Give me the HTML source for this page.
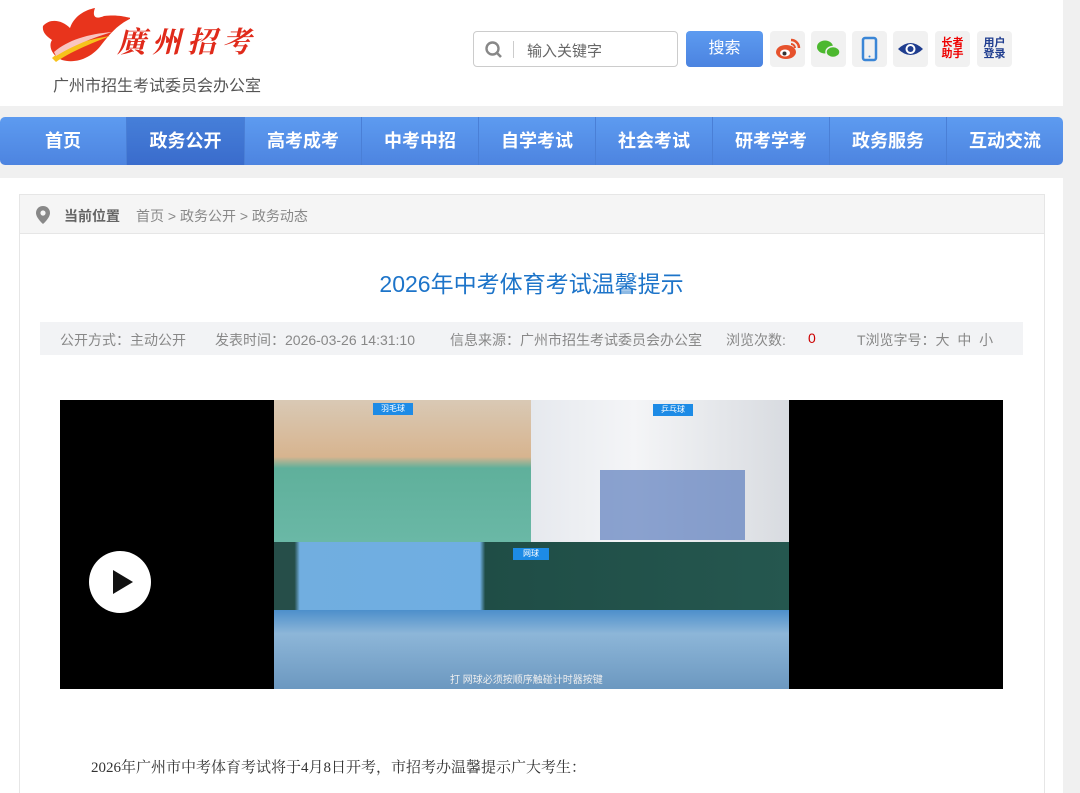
<!DOCTYPE html>
<html><head><meta charset="utf-8"><style>
*{margin:0;padding:0;box-sizing:border-box}
html,body{width:1080px;height:793px;overflow:hidden}
body{background:#f0f0f0;font-family:"Liberation Sans","Noto Sans CJK SC",sans-serif;position:relative}
.abs{position:absolute}
.wrap{position:absolute;left:0;top:0;width:1063px;height:793px;background:#fff}
.band{position:absolute;left:0;top:106px;width:1063px;height:72px;background:#f0f0f0}
.nav{position:absolute;left:0;top:117px;width:1063px;height:48px;border-radius:5px;background:linear-gradient(#5d9bf0,#4d84e0);display:flex;overflow:hidden}
.nav div{height:48px;line-height:48px;color:#fff;font-weight:bold;font-size:18px;text-align:center;border-right:1px solid #4a7fd6}
.nav .on{background:linear-gradient(#467fd9,#3a6ccc)}
.ico{position:absolute;top:31px;width:35px;height:36px;background:#f1f1f1;border-radius:4px;text-align:center}
.m{position:absolute;top:330px;font-size:14px;color:#888;white-space:pre}
</style></head><body>
<div class="wrap">
 <svg class="abs" style="left:40px;top:6px" width="90" height="60" viewBox="0 0 90 60">
  <path d="M3 20 C10 12 22 14 30 22 C34 10 45 4 55 2 C52 10 55 14 64 10 C80 8 88 12 92 12 C78 18 70 28 62 38 C52 52 36 58 22 54 C12 50 8 40 12 34 C6 30 2 26 3 20Z" fill="#e8341c"/>
  <path d="M12 52 C25 40 45 34 70 30 C50 38 30 46 16 56Z" fill="#f7c21b"/>
  <path d="M14 46 C28 34 48 28 72 26 C52 32 32 40 16 50Z" fill="#f9c5c0"/>
 </svg>
 <div class="abs" style="left:120px;top:20px;font-family:'Noto Serif CJK SC',serif;font-weight:bold;font-size:29px;color:#e02a1a;letter-spacing:6px;transform:skewX(-14deg)">廣州招考</div>
 <div class="abs" style="left:53px;top:72px;font-size:16px;color:#555">广州市招生考试委员会办公室</div>
 <div class="abs" style="left:473px;top:31px;width:205px;height:36px;border:1px solid #ccc;border-radius:4px;background:#fff">
  <svg class="abs" style="left:10px;top:8px" width="20" height="20" viewBox="0 0 20 20"><circle cx="8.5" cy="8.5" r="6" fill="none" stroke="#888" stroke-width="2.4"/><path d="M13 13l4 4" stroke="#888" stroke-width="2.6"/></svg>
  <div class="abs" style="left:39px;top:9px;width:1px;height:17px;background:#ccc"></div>
  <div class="abs" style="left:53px;top:8px;font-size:15px;color:#666">输入关键字</div>
 </div>
 <div class="abs" style="left:686px;top:31px;width:77px;height:36px;border-radius:4px;background:linear-gradient(#5d9bf0,#4b83e0);color:#fff;font-size:16px;text-align:center;line-height:36px">搜索</div>
 <div class="ico" style="left:770px"><svg width="35" height="36" viewBox="0 0 35 36"><ellipse cx="16" cy="21" rx="10" ry="7" fill="#e6522c"/><ellipse cx="15" cy="22" rx="5" ry="3.5" fill="#fff"/><circle cx="14.5" cy="22.5" r="2" fill="#333"/><path d="M21 9 a8 8 0 0 1 8 8" stroke="#e6522c" stroke-width="2.5" fill="none"/><path d="M21 13 a4 4 0 0 1 4 4" stroke="#e6522c" stroke-width="2" fill="none"/></svg></div>
 <div class="ico" style="left:811px"><svg width="35" height="36" viewBox="0 0 35 36"><ellipse cx="14" cy="16" rx="8" ry="6.5" fill="#4cb82f"/><ellipse cx="22" cy="21" rx="7" ry="5.5" fill="#4cb82f" stroke="#f1f1f1" stroke-width="1.5"/></svg></div>
 <div class="ico" style="left:852px"><svg width="35" height="36" viewBox="0 0 35 36"><rect x="11" y="7" width="13" height="22" rx="2" fill="none" stroke="#3b86d6" stroke-width="2.5"/><circle cx="17.5" cy="25.5" r="1" fill="#3b86d6"/></svg></div>
 <div class="ico" style="left:893px"><svg width="35" height="36" viewBox="0 0 35 36"><path d="M5 18 Q17.5 6 30 18 Q17.5 30 5 18Z" fill="#1f3d8f"/><circle cx="17.5" cy="18" r="5" fill="#fff"/><circle cx="17.5" cy="18" r="3" fill="#1f3d8f"/></svg></div>
 <div class="ico" style="left:935px;color:#e00;font-weight:bold;font-size:11px;line-height:11px;padding-top:7px">长者<br>助手</div>
 <div class="ico" style="left:977px;color:#1f3d8f;font-weight:bold;font-size:11px;line-height:11px;padding-top:7px">用户<br>登录</div>
</div>
<div class="band"></div>
<div class="nav">
 <div style="width:127px">首页</div><div class="on" style="width:118px">政务公开</div><div style="width:117px">高考成考</div><div style="width:117px">中考中招</div><div style="width:117px">自学考试</div><div style="width:117px">社会考试</div><div style="width:117px">研考学考</div><div style="width:117px">政务服务</div><div style="width:116px;border:none">互动交流</div>
</div>
<div class="abs" style="left:19px;top:194px;width:1026px;height:620px;border:1px solid #e6e6e6;background:#fff"></div>
<div class="abs" style="left:20px;top:195px;width:1024px;height:39px;background:#f5f5f5;border-bottom:1px solid #e6e6e6"></div>
<svg class="abs" style="left:36px;top:206px" width="14" height="18" viewBox="0 0 14 18"><path d="M7 0C3 0 0 3 0 7c0 5 7 11 7 11s7-6 7-11c0-4-3-7-7-7z" fill="#888"/><circle cx="7" cy="7" r="2.6" fill="#f5f5f5"/></svg>
<div class="abs" style="left:64px;top:206px;font-size:14px;color:#666;font-weight:bold">当前位置</div>
<div class="abs" style="left:136px;top:206px;font-size:14px;color:#888">首页 &gt; 政务公开 &gt; 政务动态</div>
<div class="abs" style="left:0;width:1063px;top:265px;text-align:center;font-size:23px;color:#1d74c9">2026年中考体育考试温馨提示</div>
<div class="abs" style="left:40px;top:322px;width:983px;height:33px;background:#f2f3f5"></div>
<div class="m" style="left:60px">公开方式：主动公开</div>
<div class="m" style="left:215px">发表时间：2026-03-26 14:31:10</div>
<div class="m" style="left:450px">信息来源：广州市招生考试委员会办公室</div>
<div class="m" style="left:726px">浏览次数:</div>
<div class="m" style="left:808px;color:#c00">0</div>
<div class="m" style="left:857px">T浏览字号：大  中  小</div>
<div class="abs" style="left:60px;top:400px;width:943px;height:289px;background:#000"></div>
<div class="abs" style="left:274px;top:400px;width:257px;height:142px;background:linear-gradient(#d9c9b5 0,#d7b48f 40%,#5fb09b 48%,#6ab8a6 100%)"></div>
<div class="abs" style="left:531px;top:400px;width:258px;height:142px;background:linear-gradient(90deg,#e6e9ee,#f4f5f7 40%,#d8dbe0)"></div>
<div class="abs" style="left:600px;top:470px;width:145px;height:70px;background:#5c7dbd;opacity:.7"></div>
<div class="abs" style="left:274px;top:542px;width:515px;height:68px;background:linear-gradient(90deg,#264e49 0,#264e49 4%,#71aee0 5%,#6faee2 40%,#1f4d46 41%,#25574f 100%)"></div>
<div class="abs" style="left:274px;top:610px;width:515px;height:79px;background:linear-gradient(#4d8fcb,#8db6d8 30%,#6c98c0 100%)"></div>
<div class="abs" style="left:373px;top:403px;width:40px;height:12px;background:#1d8be6;color:#fff;font-size:8px;text-align:center;line-height:12px">羽毛球</div>
<div class="abs" style="left:653px;top:404px;width:40px;height:12px;background:#1d8be6;color:#fff;font-size:8px;text-align:center;line-height:12px">乒乓球</div>
<div class="abs" style="left:513px;top:548px;width:36px;height:12px;background:#1d8be6;color:#fff;font-size:8px;text-align:center;line-height:12px">网球</div>
<div class="abs" style="left:450px;top:671px;font-size:10px;color:#eee">打 网球必须按顺序触碰计时器按键</div>
<div class="abs" style="left:89px;top:551px;width:62px;height:62px;border-radius:50%;background:#fff"></div>
<svg class="abs" style="left:113px;top:570px" width="22" height="24" viewBox="0 0 22 24"><path d="M0 0L20 12L0 24Z" fill="#111"/></svg>
<div class="abs" style="left:91px;top:756px;font-family:'Liberation Serif','Noto Serif CJK SC',serif;font-size:15px;color:#333">2026年广州市中考体育考试将于4月8日开考，市招考办温馨提示广大考生：</div>
</body></html>
